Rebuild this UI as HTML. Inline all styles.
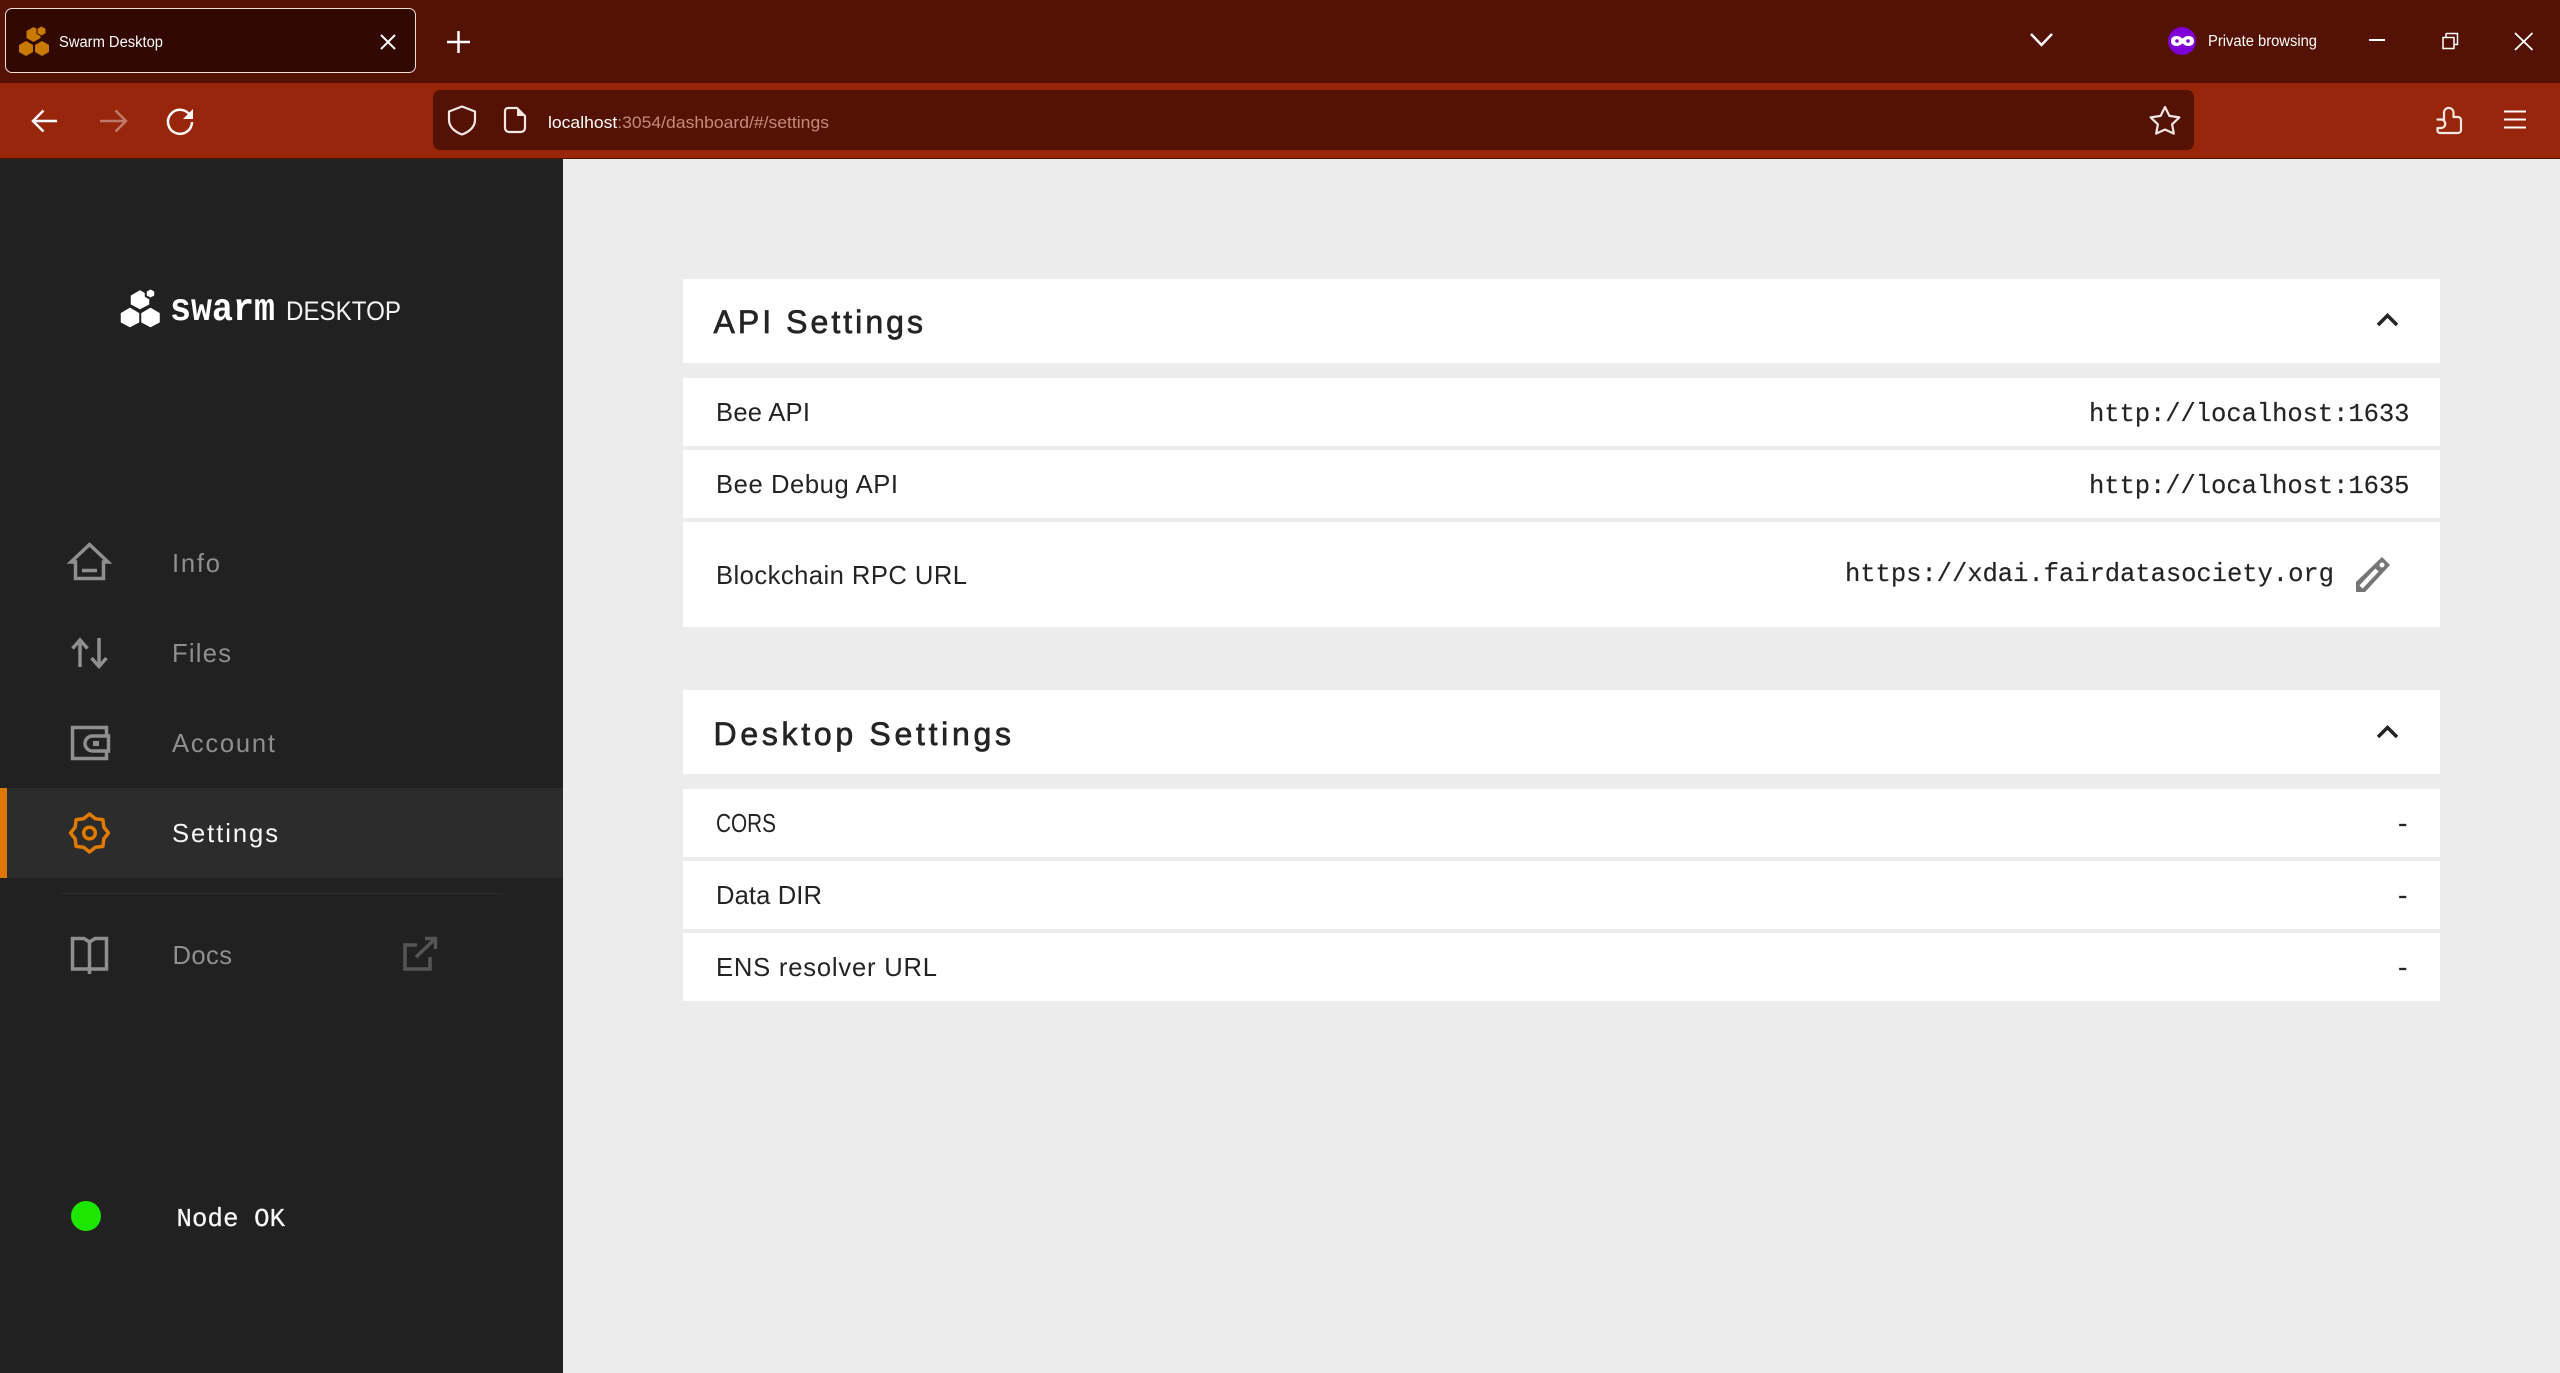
<!DOCTYPE html>
<html lang="en">
<head>
<meta charset="utf-8">
<title>Swarm Desktop</title>
<style>
html,body{margin:0;padding:0;width:2560px;height:1373px;overflow:hidden;background:#ececec}
.b{position:absolute}
svg{position:absolute;left:0;top:0}
text{white-space:pre}
.ui{font-family:"Liberation Sans",sans-serif}
.m{font-family:"Liberation Mono",monospace;font-size:25.6px;fill:#242424;stroke:#242424;stroke-width:.15px}
.l{font-family:"Liberation Sans",sans-serif;font-size:25.6px;fill:#242424}
.t{font-family:"Liberation Sans",sans-serif;font-size:32px;fill:#242424;stroke:#242424;stroke-width:.7px}
.n{font-family:"Liberation Sans",sans-serif;font-size:25.6px;fill:#8f8f8f}
.ic{fill:none;stroke:#8f8f8f;stroke-width:3.5}
.br{fill:none;stroke:#fbfbfe;stroke-width:2.5}
.sr{fill:none;stroke:#f3e7e4;stroke-width:2.2;stroke-linejoin:round}
</style>
</head>
<body>
<div class="b" style="left:0;top:0;width:2560px;height:83px;background:#541205"></div>
<div class="b" style="left:0;top:83px;width:2560px;height:75px;background:#98260b"></div>
<div class="b" style="left:0;top:158px;width:2560px;height:1px;background:#541205"></div>
<div class="b" style="left:5px;top:8px;width:409px;height:63px;background:#310802;border:1.5px solid #f2dcd6;border-radius:7px"></div>
<div class="b" style="left:433px;top:90px;width:1761px;height:60px;background:#541205;border-radius:7px"></div>

<div class="b" style="left:0;top:159px;width:563px;height:1214px;background:#212121"></div>
<div class="b" style="left:0;top:788px;width:563px;height:90px;background:#2c2c2c"></div>
<div class="b" style="left:0;top:788px;width:7px;height:90px;background:#dd7700"></div>
<div class="b" style="left:60px;top:893px;width:442px;height:1px;background:#2c2c2c"></div>

<div class="b" style="left:683px;top:279px;width:1757px;height:84px;background:#fff"></div>
<div class="b" style="left:683px;top:378px;width:1757px;height:68px;background:#fff"></div>
<div class="b" style="left:683px;top:450px;width:1757px;height:68px;background:#fff"></div>
<div class="b" style="left:683px;top:522px;width:1757px;height:105px;background:#fff"></div>
<div class="b" style="left:683px;top:690px;width:1757px;height:84px;background:#fff"></div>
<div class="b" style="left:683px;top:789px;width:1757px;height:68px;background:#fff"></div>
<div class="b" style="left:683px;top:861px;width:1757px;height:68px;background:#fff"></div>
<div class="b" style="left:683px;top:933px;width:1757px;height:68px;background:#fff"></div>

<svg width="2560" height="1373" viewBox="0 0 2560 1373" xmlns="http://www.w3.org/2000/svg">
  <!-- favicon -->
  <g fill="#c97a00">
    <path d="M26 41 33 45V52L26 56 19 52V45Z"/>
    <path d="M42 41 49 45V52L42 56 35 52V45Z"/>
    <path d="M33.500 27 40.500 31V38L33.500 42 26.500 38V31Z"/>
    <path d="M41.500 26 46 28.500V33.500L41.500 36 37 33.500V28.500Z" stroke="#310802" stroke-width="1"/>
  </g>
  <text class="ui" x="59" y="47" font-size="15.500" fill="#fbfbfe" textLength="104" lengthAdjust="spacingAndGlyphs">Swarm Desktop</text>
  <path style="fill:none;stroke:#fbfbfe;stroke-width:2" d="M381 35 395 49M395 35 381 49"/>
  <path class="br" d="M447 42H470M458.500 31V53"/>

  <!-- nav -->
  <path class="br" d="M57 121H34M43.500 110.500 33 121 43.500 131.500"/>
  <path class="br" opacity=".4" d="M100 121H125M115.500 110.500 126 121 115.500 131.500"/>
  <path class="br" d="M190.500 116A12 12 0 1 0 192 122"/>
  <path d="M193 109V119H183Z" fill="#fbfbfe"/>

  <!-- url -->
  <path class="sr" d="M462 106.500 475 111.500V120C475 127 469 132 462 134.500 455 132 449 127 449 120V111.500Z"/>
  <path class="sr" d="M508 108H517L525 116V128A4 4 0 0 1 521 132H509A4 4 0 0 1 505 128V111A3 3 0 0 1 508 108Z"/>
  <path d="M517 108 525 116H517Z" fill="#f3e7e4"/>
  <text class="ui" x="548" y="128" font-size="17" fill="#c38b7d" textLength="281" lengthAdjust="spacingAndGlyphs"><tspan fill="#fbfbfe">localhost</tspan>:3054/dashboard/#/settings</text>
  <path class="sr" d="M2165 107 2169.400 115.900 2179.300 117.400 2172.100 124.300 2173.800 133.600 2165 129.500 2156.200 133.600 2157.900 124.300 2150.700 117.400 2160.600 115.900Z"/>

  <!-- right chrome -->
  <path class="br" d="M2031 34 2041.500 45 2052 34"/>
  <circle cx="2182" cy="41" r="14" fill="#8000d7"/>
  <path d="M2171 41C2171 37 2174 36 2177 36 2179.500 36 2181 37.500 2182.500 38.500 2184 37.500 2185.500 36 2188 36 2191 36 2194 37 2194 41 2194 45 2191 46 2188 46 2185.500 46 2184 44.500 2182.500 43.500 2181 44.500 2179.500 46 2177 46 2174 46 2171 45 2171 41Z" fill="#fff"/>
  <circle cx="2177" cy="41" r="1.800" fill="#8000d7"/><circle cx="2188" cy="41" r="1.800" fill="#8000d7"/>
  <text class="ui" x="2208" y="46" font-size="15.500" fill="#fbfbfe" textLength="109" lengthAdjust="spacingAndGlyphs">Private browsing</text>
  <path style="stroke:#fff;stroke-width:2;fill:none" d="M2369 40H2385"/>
  <path style="stroke:#fff;stroke-width:1.500;fill:none" d="M2443 37.500H2454V48.500H2443ZM2446 37V34A1 1 0 0 1 2447 33.500H2457.500V44.500H2454.500"/>
  <path style="stroke:#fff;stroke-width:1.800;fill:none" d="M2515 33 2532.500 50M2532.500 33 2515 50"/>
  <path class="sr" d="M2437.500 119.500H2444V112A4.800 4.800 0 0 1 2453.500 112V117H2458A3 3 0 0 1 2461 120V130A3 3 0 0 1 2458 133H2440A2.500 2.500 0 0 1 2437.500 130.500V128H2441A4.200 4.200 0 0 0 2441 119.500Z"/>
  <path style="stroke:#fbfbfe;stroke-width:2;fill:none" d="M2504 111.500H2526M2504 119.500H2526M2504 127.500H2526"/>

  <!-- logo -->
  <g fill="#fff" stroke="#fff" stroke-width="1.500" stroke-linejoin="round">
    <path d="M130 308.500 138.500 313.500V322L130 326.500 121.500 322V313.500Z"/>
    <path d="M150.500 308.500 159 313.500V322L150.500 326.500 142 322V313.500Z"/>
    <path d="M140 291 148.500 296V304L140 308.500 131.500 304V296Z"/>
    <path d="M150.500 288.500 155 291V296L150.500 298.500 146 296V291Z" stroke="#212121" stroke-width="2.500"/>
    <path d="M150.500 289.500 154.200 291.500V295.500L150.500 297.500 146.800 295.500V291.500Z" stroke="none"/>
  </g>
  <text x="170" y="320" font-family="Liberation Mono, monospace" font-weight="700" font-size="39" fill="#fff" textLength="105" lengthAdjust="spacingAndGlyphs">swarm</text>
  <text class="ui" x="286" y="320" font-size="27" fill="#f4f4f4" textLength="115" lengthAdjust="spacingAndGlyphs">DESKTOP</text>

  <!-- sidebar icons -->
  <path class="ic" d="M71 562 89.500 544.500 108 562H103.500V578.500H75.500V562Z"/>
  <path class="ic" d="M82 570.500H97"/>
  <path class="ic" d="M80 667V639M72.500 648.500 80 640 87.500 648.500"/>
  <path class="ic" d="M99 638V667M91.500 658 99 666.500 106.500 658"/>
  <path class="ic" d="M106.500 735.500V727.500H72.500V758.500H106.500V751.500"/>
  <path class="ic" d="M108.500 736H92.500A7.500 7.500 0 0 0 92.500 751H108.500Z"/>
  <rect x="93" y="741" width="6" height="5" fill="#8f8f8f"/>
  <path style="fill:none;stroke:#e07b00;stroke-width:3.500;stroke-linejoin:round" d="M89.500 814 95.400 818.700 102.900 819.600 103.800 827.100 108.500 833 103.800 838.900 102.900 846.400 95.400 847.300 89.500 852 83.600 847.300 76.100 846.400 75.200 838.900 70.500 833 75.200 827.100 76.100 819.600 83.600 818.700Z"/>
  <circle cx="89.500" cy="833" r="5.800" fill="none" stroke="#e07b00" stroke-width="3.500"/>
  <path class="ic" d="M72.500 969V938.500H84L89.500 942 95 938.500H106.500V969Z"/>
  <path class="ic" d="M89.500 941V974"/>
  <path style="fill:none;stroke:#555;stroke-width:3.500" d="M417 945H405V969H430V957M416 957 435 939M425 938.500H435.500V949"/>
  <circle cx="86" cy="1216" r="15" fill="#1de600"/>

  <!-- sidebar text -->
  <text class="n" x="172" y="572" textLength="48">Info</text>
  <text class="n" x="172" y="662" textLength="59">Files</text>
  <text class="n" x="172" y="752" textLength="103">Account</text>
  <text class="n" x="172" y="842" textLength="106" style="fill:#f8f8f8">Settings</text>
  <text class="n" x="172.500" y="964" textLength="59.500">Docs</text>
  <text x="176.500" y="1226" font-family="Liberation Mono, monospace" font-size="25.600" fill="#f8f8f8" stroke="#f8f8f8" stroke-width=".25" textLength="108.500">Node OK</text>

  <!-- content text -->
  <text class="t" x="713.500" y="333" textLength="209.500">API Settings</text>
  <path d="M2378 325 2387.500 315.500 2397 325" fill="none" stroke="#242424" stroke-width="3.500"/>
  <text class="l" x="716" y="421" textLength="94">Bee API</text>
  <text class="m" x="2089" y="421" textLength="320.500">http://localhost:1633</text>
  <text class="l" x="716" y="493" textLength="182">Bee Debug API</text>
  <text class="m" x="2089" y="493" textLength="320.500">http://localhost:1635</text>
  <text class="l" x="716" y="584" textLength="251">Blockchain RPC URL</text>
  <text class="m" x="1845" y="581" textLength="489">https://xdai.fairdatasociety.org</text>
  <path d="M2356 592V582L2382 557 2390 565 2365 592Z" fill="#757575"/>
  <path d="M2361 587 2377 570" stroke="#fff" stroke-width="4.500" fill="none"/>
  <circle cx="2382" cy="565" r="2.500" fill="#fff"/>

  <text class="t" x="713.500" y="745" textLength="297.500">Desktop Settings</text>
  <path d="M2378 737 2387.500 727.500 2397 737" fill="none" stroke="#242424" stroke-width="3.500"/>
  <text class="l" x="716" y="832" textLength="60" lengthAdjust="spacingAndGlyphs">CORS</text>
  <text class="l" x="716" y="904" textLength="106">Data DIR</text>
  <text class="l" x="716" y="976" textLength="221">ENS resolver URL</text>
  <text class="m" x="2395" y="832">-</text>
  <text class="m" x="2395" y="904">-</text>
  <text class="m" x="2395" y="976">-</text>
</svg>
</body>
</html>
